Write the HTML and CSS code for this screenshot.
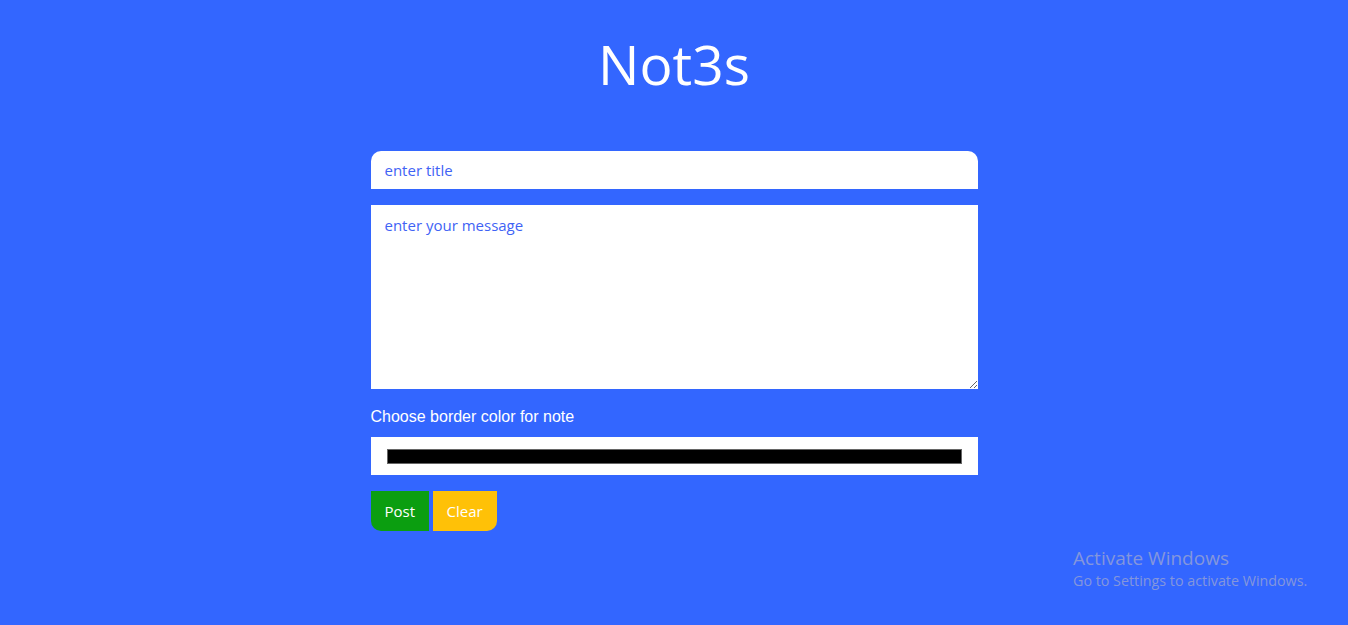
FILE: index.html
```html
<!DOCTYPE html>
<html lang="en">
<head>
<meta charset="utf-8">
<title>Not3s</title>
<link rel="stylesheet" href="styles.css">
</head>
<body>
<main class="page">
  <h1 class="brand">Not3s</h1>
  <form class="note-form">
    <input class="title-input" type="text" placeholder="enter title">
    <textarea class="message-input" placeholder="enter your message"></textarea>
    <label class="color-label" for="color">Choose border color for note</label>
    <div class="color-box"><input id="color" class="color-input" type="color" value="#000000"></div>
    <div class="actions">
      <button type="button" class="btn btn-post">Post</button>
      <button type="button" class="btn btn-clear">Clear</button>
    </div>
  </form>
</main>
<div class="watermark">
  <div class="wm-title">Activate Windows</div>
  <div class="wm-sub">Go to Settings to activate Windows.</div>
</div>
</body>
</html>
```
FILE: styles.css
```css
html, body {
  margin: 0;
  padding: 0;
  height: 100%;
}
body {
  background: #3366ff;
  font-family: "Open Sans", "Noto Sans", sans-serif;
  overflow: hidden;
}
.page {
  display: flex;
  flex-direction: column;
  align-items: center;
  padding-top: 24px;
}
.brand {
  margin: 0;
  color: #ffffff;
  font-weight: 400;
  font-size: 55px;
  line-height: 80px;
  font-family: "Open Sans", "Noto Sans", sans-serif;
}
.note-form {
  width: 607px;
  margin-top: 47px;
  display: flex;
  flex-direction: column;
}
.title-input {
  box-sizing: border-box;
  height: 38px;
  border: none;
  border-radius: 10px 10px 0 0;
  padding: 0 14px;
  font-family: "Open Sans", sans-serif;
  font-size: 15px;
  color: #3366ff;
  outline: none;
}
.title-input::placeholder,
.message-input::placeholder {
  color: #3f63f5;
}
.message-input {
  box-sizing: border-box;
  margin-top: 16px;
  height: 184px;
  border: none;
  border-radius: 0;
  padding: 10px 14px;
  font-family: "Open Sans", sans-serif;
  font-size: 15px;
  color: #3366ff;
  outline: none;
  resize: vertical;
}
.color-label {
  margin-top: 18px;
  color: #ffffff;
  font-family: "Liberation Sans", Arial, sans-serif;
  font-size: 16px;
  line-height: 19px;
}
.color-box {
  margin-top: 11px;
  background: #ffffff;
  height: 38px;
  display: flex;
  align-items: center;
  padding: 0 16px;
}
.color-input {
  -webkit-appearance: none;
  appearance: none;
  width: 100%;
  height: 15px;
  border: none;
  padding: 0;
  background: none;
  cursor: pointer;
}
.color-input::-webkit-color-swatch-wrapper {
  padding: 0;
}
.color-input::-webkit-color-swatch {
  border: 1px solid #666;
  border-radius: 0;
}
.actions {
  margin-top: 16px;
  display: flex;
  gap: 4px;
}
.btn {
  height: 40px;
  border: none;
  color: #ffffff;
  font-family: "Open Sans", sans-serif;
  font-size: 15px;
  padding: 0 14px;
  cursor: pointer;
}
.btn-post {
  background: #0b9e10;
  border-radius: 0 0 0 10px;
  width: 58px;
}
.btn-clear {
  background: #ffc107;
  border-radius: 0 0 10px 0;
  width: 64px;
}
.watermark {
  position: absolute;
  left: 1073px;
  top: 545px;
  color: #8496dc;
  font-family: "Open Sans", sans-serif;
}
.wm-title {
  font-size: 19px;
  line-height: 26px;
}
.wm-sub {
  font-size: 14.3px;
  line-height: 20px;
}
```
